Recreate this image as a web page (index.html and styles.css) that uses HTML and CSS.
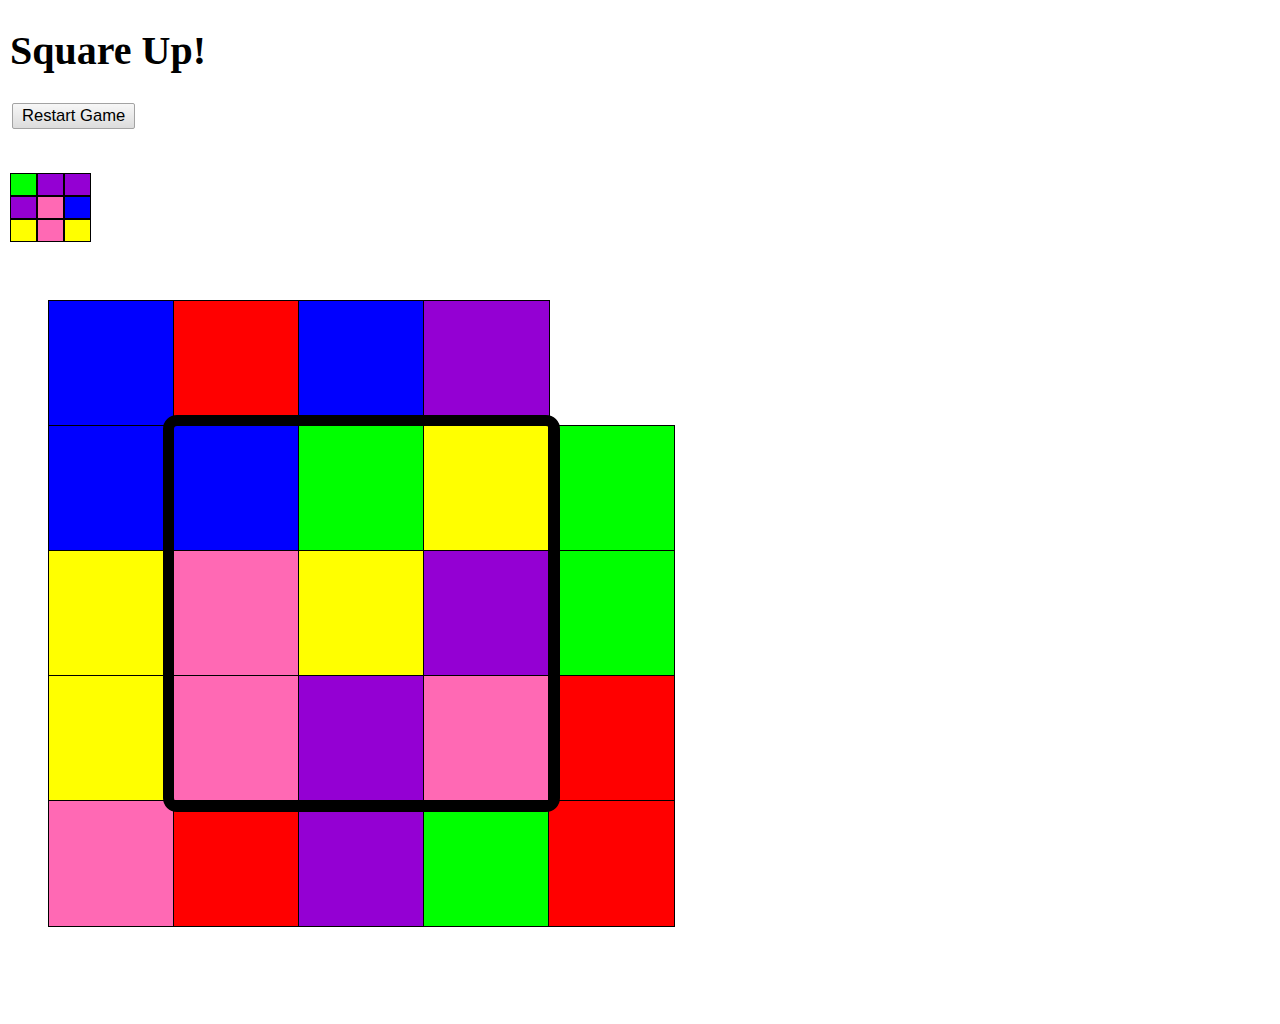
FILE: index.html
```html
<!DOCTYPE html>
<html>
<head>
<meta charset="utf-8">
<title>Square Up!</title>
<link rel="stylesheet" href="styles.css">
</head>
<body>
<div class="page">
  <h1 class="title">Square Up!</h1>
  <button class="restart" type="button">Restart Game</button>
  <div class="target">
    <div class="t green"></div><div class="t purple"></div><div class="t purple"></div>
    <div class="t purple"></div><div class="t pink"></div><div class="t blue"></div>
    <div class="t yellow"></div><div class="t pink"></div><div class="t yellow"></div>
  </div>
  <div class="board">
    <div class="c blue"></div><div class="c red"></div><div class="c blue"></div><div class="c purple"></div><div class="c empty"></div>
    <div class="c blue"></div><div class="c blue"></div><div class="c green"></div><div class="c yellow"></div><div class="c green"></div>
    <div class="c yellow"></div><div class="c pink"></div><div class="c yellow"></div><div class="c purple"></div><div class="c green"></div>
    <div class="c yellow"></div><div class="c pink"></div><div class="c purple"></div><div class="c pink"></div><div class="c red"></div>
    <div class="c pink"></div><div class="c red"></div><div class="c purple"></div><div class="c green"></div><div class="c red"></div>
    <div class="selector"></div>
  </div>
</div>
</body>
</html>
```

FILE: styles.css
```css
html, body {
  margin: 0;
  padding: 0;
  background: #ffffff;
}

.page {
  padding: 0 10px 40px 10px;
  font-family: "Liberation Serif", "Times New Roman", serif;
  color: #000;
}

.title {
  font-size: 40px;
  font-weight: bold;
  margin: 29px 0 30px 0;
  line-height: 44px;
}

.restart {
  display: block;
  margin: 0 0 0 2px;
  font-family: "Liberation Sans", Arial, sans-serif;
  font-size: 16.6px;
  line-height: 18px;
  height: 26px;
  padding: 3px 9px;
  color: #000;
  border: 1px solid #a3a3a3;
  border-radius: 2px;
  background: linear-gradient(#f7f7f7, #dcdcdc);
}

.target {
  display: grid;
  grid-template-columns: repeat(3, 27px);
  grid-auto-rows: 23px;
  margin-top: 44px;
  width: 81px;
}

.t {
  border: 1px solid #000;
}

.board {
  position: relative;
  display: grid;
  grid-template-columns: repeat(5, 125px);
  grid-auto-rows: 125px;
  margin: 58px 0 0 38px;
  width: 625px;
}

.c {
  width: 127px;
  height: 127px;
  box-sizing: border-box;
  border: 1px solid #000;
}

.c.empty {
  border: none;
  background: transparent;
}

.blue { background: #0000ff; }
.red { background: #ff0000; }
.purple { background: #9400d3; }
.yellow { background: #ffff00; }
.green { background: #00ff00; }
.pink { background: #ff69b4; }

.selector {
  position: absolute;
  left: 115px;
  top: 115px;
  width: 397px;
  height: 397px;
  box-sizing: border-box;
  border: 11px solid #000;
  border-radius: 14px;
}
```
